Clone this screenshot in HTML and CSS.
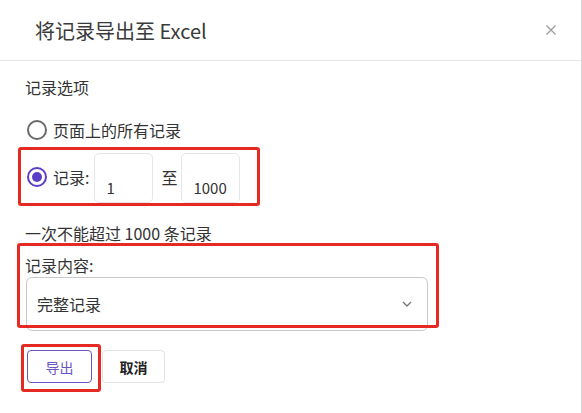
FILE: index.html
```html
<!DOCTYPE html>
<html lang="zh-CN">
<head>
<meta charset="utf-8">
<title>将记录导出至 Excel</title>
<link rel="stylesheet" href="styles.css">
</head>
<body>
<div class="dialog">
  <div class="header">
    <div class="title">将记录导出至 Excel</div>
    <svg class="close" width="10" height="10" viewBox="0 0 10 10"><path d="M0.5 0.5 L9.5 9.5 M9.5 0.5 L0.5 9.5" stroke="#9a9a9a" stroke-width="1.2" fill="none"/></svg>
  </div>
  <div class="content">
    <div class="section-title">记录选项</div>
    <div class="radio-row">
      <span class="radio"></span>
      <span class="label">页面上的所有记录</span>
    </div>
    <div class="range-box">
      <span class="radio checked raise"></span>
      <span class="label range-label raise">记录:</span>
      <input class="num" type="text" value="1">
      <span class="label to raise">至</span>
      <input class="num num2" type="text" value="1000">
    </div>
    <div class="hint">一次不能超过 1000 条记录</div>
    <div class="content-box">
      <div class="field-label">记录内容:</div>
      <div class="select">
        <span class="select-text">完整记录</span>
        <svg class="chevron" width="10" height="6" viewBox="0 0 10 6"><polyline points="1,1 5,5 9,1" stroke="#777" stroke-width="1.4" fill="none"/></svg>
      </div>
    </div>
    <div class="actions">
      <div class="btn-box">
        <button class="btn primary">导出</button>
      </div>
      <button class="btn cancel">取消</button>
    </div>
  </div>
</div>
</body>
</html>
```
FILE: styles.css
```css
html, body {
  margin: 0;
  padding: 0;
  background: #ffffff;
}
body {
  font-family: "Noto Sans CJK SC", "Noto Sans", sans-serif;
  color: #333333;
}
.dialog {
  width: 581px;
  height: 413px;
  border-right: 1px solid #d4d4d4;
  background: #ffffff;
}
.header {
  height: 60px;
  border-bottom: 1px solid #e6e6e6;
  display: flex;
  align-items: center;
  justify-content: space-between;
  padding: 0 25px 0 35px;
  box-sizing: content-box;
}
.title {
  font-size: 20px;
  line-height: 28px;
  color: #3a3a3a;
  padding-top: 2px;
}
.close {
  display: block;
}
.content {
  padding: 0 25px;
}
.section-title {
  font-size: 16px;
  line-height: 24px;
  margin-top: 14px;
}
.radio-row {
  display: flex;
  align-items: center;
  height: 24px;
  margin-top: 19px;
  margin-left: 2px;
}
.radio {
  box-sizing: border-box;
  width: 20px;
  height: 20px;
  border: 2px solid #6a6a6a;
  border-radius: 50%;
  display: inline-flex;
  align-items: center;
  justify-content: center;
  flex: none;
}
.radio.checked {
  border-color: #5a3ec8;
}
.radio.checked::before {
  content: "";
  width: 10px;
  height: 10px;
  border-radius: 50%;
  background: #5a3ec8;
}
.label {
  font-size: 16px;
  line-height: 24px;
  margin-left: 6px;
}
.range-box {
  display: inline-flex;
  align-items: center;
  margin-top: 5px;
  margin-left: -7px;
  border: 3px solid #e42a22;
  border-radius: 3px;
  padding: 3px 17px 0 6px;
}
.raise {
  margin-bottom: 3px;
}
.range-label {
  margin-right: 5px;
}
.to {
  margin-left: 8px;
  margin-right: 4px;
}
.num {
  box-sizing: border-box;
  width: 59px;
  height: 50px;
  border: 1px solid #e6e6e6;
  border-radius: 5px;
  padding: 18px 8px 0 11px;
  font-family: "Noto Sans CJK SC", "Noto Sans", sans-serif;
  font-size: 15px;
  color: #333333;
  background: #ffffff;
  outline: none;
}
.hint {
  font-size: 16px;
  line-height: 24px;
  margin-top: 15px;
}
.content-box {
  position: relative;
  width: 403px;
  margin-top: 8px;
}
.content-box::after {
  content: "";
  position: absolute;
  top: -10px;
  left: -8px;
  right: -11px;
  bottom: 3px;
  border: 3px solid #e42a22;
  border-radius: 3px;
  pointer-events: none;
}
.field-label {
  font-size: 16px;
  line-height: 24px;
}
.select {
  box-sizing: border-box;
  width: 402px;
  height: 54px;
  margin-left: 1px;
  border: 1px solid #c9c9c9;
  border-radius: 6px;
  display: flex;
  align-items: center;
  justify-content: space-between;
  padding: 0 15px 0 10px;
  background: #ffffff;
}
.select-text {
  font-size: 16px;
  line-height: 24px;
}
.chevron {
  display: block;
}
.actions {
  display: flex;
  align-items: flex-start;
  margin-top: 13px;
}
.btn-box {
  margin-left: -4px;
  border: 3px solid #e42a22;
  border-radius: 3px;
  padding: 3px 6px 6px 3px;
}
.btn {
  box-sizing: border-box;
  height: 33px;
  border-radius: 4px;
  font-family: "Noto Sans CJK SC", "Noto Sans", sans-serif;
  font-size: 14px;
  background: #ffffff;
  display: block;
  padding: 0;
}
.primary {
  width: 65px;
  border: 1px solid #6b55c4;
  color: #6b55c4;
}
.cancel {
  width: 63px;
  margin-left: 1px;
  margin-top: 6px;
  border: 1px solid #e3e3e3;
  color: #222222;
  font-weight: bold;
}
```
